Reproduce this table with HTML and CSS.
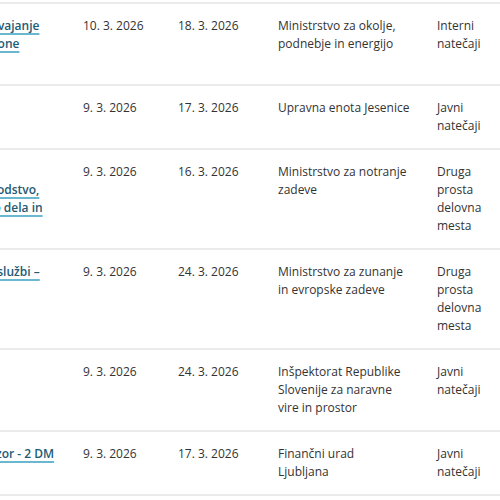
FILE: index.html
```html
<!DOCTYPE html>
<html lang="sl">
<head>
<meta charset="utf-8">
<title>Prosta delovna mesta</title>
<link rel="stylesheet" href="styles.css">
</head>
<body>
<div class="scroller">
  <table class="jobs">
    <colgroup>
      <col class="c-title"><col class="c-date"><col class="c-due"><col class="c-org"><col class="c-type">
    </colgroup>
    <tbody>
      <tr>
        <td class="title"><a href="#">Višji svetovalec (m/ž) v Sektorju za odvajanje<br>komunalnih odpadnih voda, obalne cone<br>(šifra DM 2011)</a></td>
        <td>10. 3. 2026</td>
        <td>18. 3. 2026</td>
        <td class="org">Ministrstvo za okolje,<br>podnebje in energijo</td>
        <td>Interni natečaji</td>
      </tr>
      <tr>
        <td class="title"><a href="#">Strokovni sodelavec (m/ž)</a></td>
        <td>9. 3. 2026</td>
        <td>17. 3. 2026</td>
        <td class="org">Upravna enota Jesenice</td>
        <td>Javni natečaji</td>
      </tr>
      <tr>
        <td class="title"><a href="#">Sekretar (m/ž) v Direktoratu<br>za policijo, druge varnostne naloge, vodstvo,<br>Sektor za organizacijo in sistemizacijo dela in<br>kadre</a></td>
        <td>9. 3. 2026</td>
        <td>16. 3. 2026</td>
        <td class="org">Ministrstvo za notranje<br>zadeve</td>
        <td>Druga prosta delovna mesta</td>
      </tr>
      <tr>
        <td class="title"><a href="#">Višji svetovalec II (m/ž) v diplomatski službi –<br>Generalni konzulat</a></td>
        <td>9. 3. 2026</td>
        <td>24. 3. 2026</td>
        <td class="org">Ministrstvo za zunanje<br>in evropske zadeve</td>
        <td>Druga prosta delovna mesta</td>
      </tr>
      <tr>
        <td class="title"><a href="#">Inšpektor (m/ž)</a></td>
        <td>9. 3. 2026</td>
        <td>24. 3. 2026</td>
        <td class="org">Inšpektorat Republike<br>Slovenije za naravne<br>vire in prostor</td>
        <td>Javni natečaji</td>
      </tr>
      <tr>
        <td class="title"><a href="#">Finančni inšpektor (m/ž) - davčni nadzor - 2 DM</a></td>
        <td>9. 3. 2026</td>
        <td>17. 3. 2026</td>
        <td class="org">Finančni urad<br>Ljubljana</td>
        <td>Javni natečaji</td>
      </tr>
    </tbody>
  </table>
</div>
</body>
</html>
```
FILE: styles.css
```css
html, body {
  margin: 0;
  background: #fff;
}
body {
  font-family: "Open Sans", "Noto Sans", sans-serif;
  font-size: 12px;
  line-height: 18px;
  color: #333;
}
.scroller {
  width: 500px;
  overflow: hidden;
  padding-top: 2px;
}
.jobs {
  margin-left: -244px;
  width: 751px;
  table-layout: fixed;
  border-collapse: collapse;
  border-top: 2px solid #ebebeb;
}
.c-title { width: 313px; }
.c-date { width: 95px; }
.c-due { width: 100px; }
.c-org { width: 159px; }
.c-type { width: 84px; }
.jobs td {
  vertical-align: top;
  padding: 13px 14px;
  border-bottom: 2px solid #ebebeb;
}
.jobs td.title {
  white-space: nowrap;
  padding-left: 27px;
}
.jobs td.org {
  white-space: nowrap;
}
.jobs a {
  color: #245a74;
  font-weight: 600;
  text-decoration: underline;
  text-decoration-color: #6ab8cf;
  text-decoration-thickness: 2px;
  text-underline-offset: 3px;
}
```
